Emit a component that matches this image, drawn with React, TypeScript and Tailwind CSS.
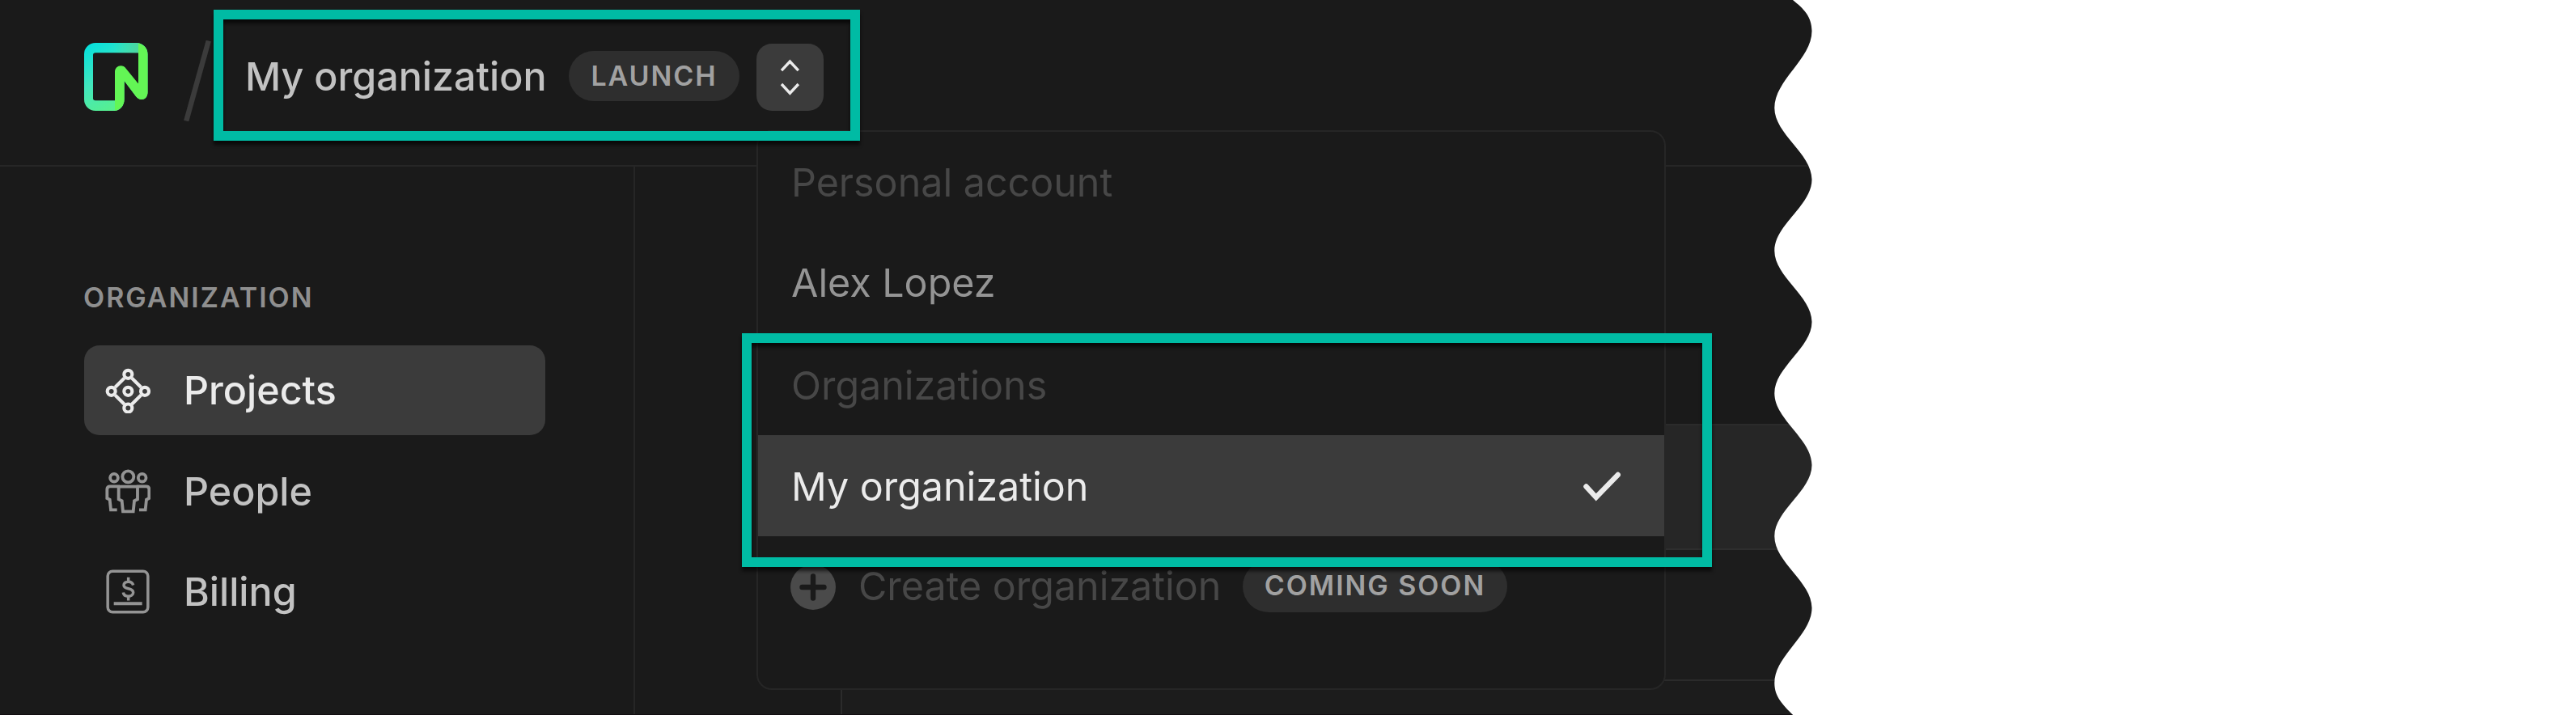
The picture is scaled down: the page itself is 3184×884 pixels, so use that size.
import React from "react";

function NeonLogo() {
  return (
    <svg className="h-[84px] w-[79px] shrink-0" viewBox="0 0 79 84" fill="none">
      <defs>
        <linearGradient id="logo-base" x1="0" y1="0" x2="50" y2="84" gradientUnits="userSpaceOnUse">
          <stop offset="0" stopColor="#00e0e0" />
          <stop offset="0.5" stopColor="#42e6bd" />
          <stop offset="1" stopColor="#5cf284" />
        </linearGradient>
        <linearGradient id="logo-shade" x1="36" y1="0" x2="67" y2="0" gradientUnits="userSpaceOnUse">
          <stop offset="0" stopColor="#55d98f" stopOpacity="0" />
          <stop offset="1" stopColor="#55d08f" stopOpacity="0.7" />
        </linearGradient>
      </defs>
      <path
        fill="url(#logo-base)"
        fillRule="evenodd"
        d="M14 0H64.5A14 14 0 0 1 78.5 14V61C78.5 70.5 69 73 63.9 66L49.6 47V70A12 14 0 0 1 38 84H14A14 14 0 0 1 0 70V14A14 14 0 0 1 14 0ZM14 12.3Q11 12.3 11 15V68.5Q11 71.3 14 71.3H38V36L67 50.4V12.3Z"
      />
      <path fill="url(#logo-shade)" d="M36 0H67V12.3H36Z" />
      <path
        fill="#63f655"
        d="M67 .3C74 2 78.5 7 78.5 14V61C78.5 70.5 69 73 63.9 66L49.6 47V70C49.6 77 45 82 38 84V36C38 28.5 47 25.5 51.7 31.7L67 50.4Z"
      />
    </svg>
  );
}

function ProjectsIcon() {
  return (
    <svg className="size-14 shrink-0" viewBox="30 28.5 168 168" fill="none" stroke="#ebebeb" strokeWidth="12.5">
      <circle cx="115" cy="52" r="15" />
      <circle cx="53" cy="115" r="15" />
      <circle cx="177" cy="115" r="15" />
      <circle cx="115" cy="177" r="15" />
      <circle cx="115" cy="115" r="15" />
      <path d="M101 66 67 100M129 66l34 34M67 129l34 34M163 129l-34 34" />
    </svg>
  );
}

function PeopleIcon() {
  return (
    <svg className="size-14 shrink-0" viewBox="30 27 168 168" fill="none" stroke="#949494" strokeWidth="11.5">
      <circle cx="115" cy="58" r="21" />
      <circle cx="63" cy="62" r="14.5" />
      <circle cx="167" cy="62" r="14.5" />
      <path d="M80 100Q80 95 86 95H144Q150 95 150 100V142L138 148 134 187H96L92 148 80 142Z" />
      <path d="M84 94H48Q37 94 37 105V138L47 143 51 181H74" />
      <path d="M146 94H182Q193 94 193 105V138L183 143 179 181H156" />
    </svg>
  );
}

function BillingIcon() {
  return (
    <svg className="size-14 shrink-0" viewBox="30 400.5 168 168" fill="none" stroke="#949494" strokeWidth="10.5">
      <rect x="39.5" y="407" width="149" height="152" rx="18" />
      <path d="M62 527H167" strokeWidth="12" />
      <path d="M134 459C132 450 125 446 116 446 105 446 99 452 99 459 99 477 134 466 134 486 134 495 126 500 116 500 105 500 98 495 97 486M116 430V446M116 500V516" />
    </svg>
  );
}

function ChevronsIcon() {
  return (
    <svg className="size-[83px]" viewBox="0 0 83 83" fill="none" stroke="#ebebeb" strokeWidth="3.4">
      <path d="M31 33.2 41.4 22 51.8 33.2M31 50 41.4 61.2 51.8 50" />
    </svg>
  );
}

function Badge({ children, className }: { children: React.ReactNode; className: string }) {
  return (
    <span
      className={`flex shrink-0 items-center justify-center rounded-full bg-[#2e2e2e] text-[34px] leading-none font-semibold tracking-[1.95px] whitespace-nowrap text-[#a1a1a1] ${className}`}
    >
      {children}
    </span>
  );
}

const navItems = [
  { label: "Projects", icon: <ProjectsIcon />, active: true },
  { label: "People", icon: <PeopleIcon />, active: false },
  { label: "Billing", icon: <BillingIcon />, active: false },
];

function Header() {
  return (
    <header className="h-[206px] shrink-0 border-b-2 border-[#262626]">
      <div className="flex h-[190px] items-center pl-[104px]">
        <NeonLogo />
        <svg className="mt-[9px] ml-[42px] h-[100px] w-[38px] shrink-0" viewBox="0 0 38 100">
          <path d="M5.2 99.5 32.8 0.5" stroke="#3b3b3b" strokeWidth="6.4" />
        </svg>
        <span className="ml-[40px] w-[373px] text-[48.4px] leading-none font-medium whitespace-nowrap text-[#c2c2c2]">
          My organization
        </span>
        <Badge className="ml-[27px] mb-[2px] h-[62px] w-[211px]">LAUNCH</Badge>
        <button className="ml-[21px] size-[83px] shrink-0 rounded-[19px] bg-[#3b3b3b]">
          <ChevronsIcon />
        </button>
      </div>
    </header>
  );
}

function Sidebar() {
  return (
    <aside className="w-[785px] shrink-0 border-r-2 border-[#262626] pt-[145px] pr-[109px] pl-[104px]">
      <h2 className="-ml-px h-[34px] text-[34px] leading-none font-semibold tracking-[2px] text-[#8f8f8f]">ORGANIZATION</h2>
      <nav className="mt-[42px] flex flex-col gap-[13.6px]">
        {navItems.map((item) => (
          <a
            key={item.label}
            className={`flex h-[111px] items-center gap-[41px] rounded-[19px] pl-[26px] text-[48.4px] leading-none font-medium ${
              item.active ? "bg-[#3b3b3b] text-[#ebebeb]" : "text-[#c2c2c2]"
            }`}
          >
            {item.icon}
            <span className="pt-[2px]">{item.label}</span>
          </a>
        ))}
      </nav>
    </aside>
  );
}

function Content() {
  return (
    <main className="flex flex-1 flex-col pt-[318px] pl-[254px]">
      <div className="flex flex-1 flex-col border-t-2 border-l-2 border-[#2b2b2b] bg-[#1c1c1c]">
        <div className="h-[154px] border-b-2 border-[#2e2e2e] bg-[#262626]" />
        <div className="h-[162px] border-b-2 border-[#2b2b2b]" />
      </div>
    </main>
  );
}

function OrganizationMenu() {
  return (
    <div className="absolute top-[161px] left-[935px] flex h-[692px] w-[1124px] flex-col rounded-[19px] border-2 border-[#262626] bg-[#1a1a1a] text-[48.4px] leading-none whitespace-nowrap text-[#474747]">
      <div className="flex h-[123px] items-center pt-[3px] pl-[41px]">Personal account</div>
      <div className="flex h-[127px] items-center pt-[2px] pl-[41px] text-[#949494]">Alex Lopez</div>
      <div className="flex h-[125px] items-center pt-[4px] pl-[41px]">Organizations</div>
      <div className="flex h-[125px] items-center justify-between bg-[#3b3b3b] pr-[50px] pl-[41px] text-[#ebebeb]">
        <span className="pt-[4px]">My organization</span>
        <svg className="mt-[2px] h-[42px] w-[54px]" viewBox="0 0 54 42" fill="none" stroke="#ebebeb" strokeWidth="6.4" strokeLinecap="round">
          <path d="M7.5 20.5 19.8 33.8 46.8 6" />
        </svg>
      </div>
      <div className="flex h-[121px] items-center pl-[40px]">
        <svg className="mt-[4px] size-[56px] shrink-0" viewBox="0 0 56 56" fill="none">
          <circle cx="28" cy="28" r="28" fill="#4a4a4a" />
          <path d="M14.5 28H41.5M28 14.5V41.5" stroke="#1a1a1a" strokeWidth="6.4" strokeLinecap="round" />
        </svg>
        <span className="ml-[28px] w-[449px] pt-[3px]">Create organization</span>
        <Badge className="mt-[3px] ml-[26px] h-[64px] w-[327px] pb-[3px]">COMING SOON</Badge>
      </div>
    </div>
  );
}

function TornEdge() {
  const peaks = [38.3, 222, 398, 575, 751.5];
  const troughs = [133.6, 310, 486.2, 663, 844.5];
  let d = "M2211 -4C2226 8 2239.5 18 2239.5 38.3";
  peaks.forEach((peak, i) => {
    const trough = troughs[i];
    const h = (trough - peak) * 0.365;
    d += `C2239.5 ${peak + h} 2193.3 ${trough - h} 2193.3 ${trough}`;
    if (i < peaks.length - 1) {
      const next = peaks[i + 1];
      const k = (next - trough) * 0.365;
      d += `C2193.3 ${trough + k} 2239.5 ${next - k} 2239.5 ${next}`;
    }
  });
  d += "C2193.3 864 2207 874 2220 888H2300V-4Z";
  return (
    <svg className="pointer-events-none absolute inset-0 h-[884px] w-[2260px]" viewBox="0 0 2260 884">
      <path d={d} fill="#ffffff" />
    </svg>
  );
}

export default function App() {
  return (
    <div className="relative h-[884px] w-[3184px] overflow-hidden bg-white font-['Inter',sans-serif]">
      <div className="flex h-full w-[2250px] flex-col border-b border-[#120d11] bg-[#1a1a1a]">
        <Header />
        <div className="flex min-h-0 flex-1">
          <Sidebar />
          <Content />
        </div>
      </div>
      <OrganizationMenu />
      <div className="absolute top-[12px] left-[264px] h-[162px] w-[799px] border-[12px] border-[#00bba4] drop-shadow-[0_5px_2px_rgba(0,0,0,0.65)]" />
      <div className="absolute top-[412px] left-[917px] h-[289px] w-[1199px] border-[12px] border-[#00bba4] drop-shadow-[0_5px_2px_rgba(0,0,0,0.65)]" />
      <TornEdge />
    </div>
  );
}
